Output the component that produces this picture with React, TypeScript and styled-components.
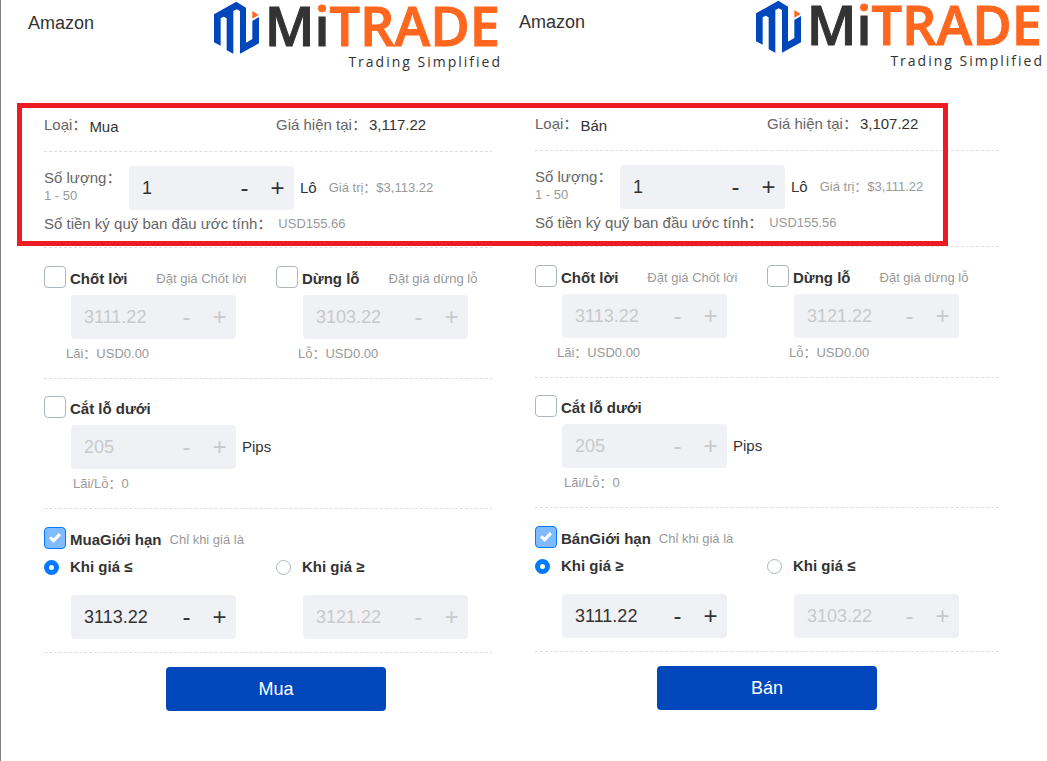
import React, { useId, useState } from "react";
import styled, { createGlobalStyle } from "styled-components";

const GlobalStyle = createGlobalStyle`
  * { box-sizing: border-box; }
  body {
    margin: 0;
    background: #fff;
    color: #333;
    font-family: "Liberation Sans", "Noto Sans CJK SC", sans-serif;
    font-size: 15px;
    line-height: 20px;
  }
  button, input { font: inherit; color: inherit; }
`;

const Page = styled.div`
  position: relative;
  min-height: 100vh;
  border-left: 1px solid #808080;
`;

const Headers = styled.header`
  display: grid;
  grid-template-columns: 499fr 547fr;
  height: 99px;
`;

const Header = styled.div<{ $start: number; $end: number; $top: number }>`
  display: flex;
  justify-content: space-between;
  padding: ${(p) => `${p.$top}px ${p.$end}px 0 ${p.$start}px`};
`;

const Title = styled.h1`
  margin: 12px 0 0;
  font-size: 18px;
  line-height: 20px;
  font-weight: 400;
`;

const Brand = styled.div`
  display: grid;
  grid-template-columns: 45px auto;
  column-gap: 6px;
  align-content: start;
  justify-items: end;
`;

const Mark = styled.svg`
  display: block;
  width: 45px;
  height: 53px;
`;

const Wordmark = styled.div`
  height: 51px;
  font-family: "Open Sans", sans-serif;
  font-size: 54px;
  line-height: 49px;
  font-weight: 600;
  color: #ff671f;
  white-space: nowrap;
  -webkit-text-stroke: 1px #ff671f;
`;

const Dark = styled.span`
  color: #333;
  -webkit-text-stroke-color: #333;
`;

const DottedI = styled.span`
  color: transparent;
  background: linear-gradient(#ff671f 0 36%, #333 36%);
  background-clip: text;
  -webkit-background-clip: text;
  -webkit-text-stroke-color: transparent;
`;

const Tagline = styled.div`
  grid-column: 1 / -1;
  margin-right: -2px;
  font-family: "Open Sans", sans-serif;
  font-size: 14px;
  line-height: 16px;
  letter-spacing: 2px;
`;

const Panels = styled.main`
  display: grid;
  grid-template-columns: 491fr 555fr;
`;

const Panel = styled.section<{ $top: number }>`
  min-width: 0;
  overflow: hidden;
  padding: ${(p) => p.$top}px 48px 0 43px;
`;

const Form = styled.form`
  min-width: 464px;
`;

const Block = styled.div<{ $top: number; $bottom: number }>`
  padding: ${(p) => `${p.$top}px 0 ${p.$bottom}px`};
  border-bottom: 1px dashed #ddd;
`;

const Columns = styled.div`
  display: grid;
  grid-template-columns: 232px 1fr;
`;

const Pair = styled.div`
  display: flex;
  align-items: flex-start;
  gap: 2px;
`;

const Label = styled.span`
  color: #666;
  white-space: nowrap;
`;

const Kind = styled.span`
  line-height: 24px;
`;

const QuantityRow = styled.div`
  display: flex;
  align-items: center;
`;

const QuantityLabel = styled.label`
  width: 85px;
  padding-bottom: 2px;
  color: #666;
  line-height: 18px;
  white-space: nowrap;
`;

const Small = styled.span`
  color: #999;
  font-size: 13px;
  line-height: 18px;
  white-space: nowrap;
`;

const Range = styled(Small)`
  display: block;
`;

const Unit = styled.span`
  margin: 0 12px 0 6px;
`;

const StepperBox = styled.div<{ $off: boolean }>`
  display: flex;
  flex: none;
  width: 165px;
  height: 44px;
  border-radius: 4px;
  background: #f0f1f5;
  color: ${(p) => (p.$off ? "#c8c9cc" : "#333")};
`;

const StepperInput = styled.input`
  flex: 1;
  min-width: 0;
  padding: 0 0 0 13px;
  border: 0;
  background: transparent;
  font-size: 18px;
  outline: none;
`;

const StepButton = styled.button`
  width: 33px;
  padding: 0;
  border: 0;
  background: transparent;
  font-size: 24px;
  line-height: 24px;
`;

const CheckRow = styled.div`
  display: flex;
  align-items: flex-start;
  height: 22px;
`;

const CheckBox = styled.input`
  appearance: none;
  flex: none;
  display: grid;
  place-items: center;
  width: 22px;
  height: 22px;
  margin: 0 4px 0 0;
  border: 1px solid #adb5bd;
  border-radius: 4px;
  background: #fff;
  &:checked {
    border-color: #007bff;
    background: #80bbff;
  }
  &:checked::after {
    content: "";
    width: 12px;
    height: 12px;
    background: #fff;
    clip-path: polygon(82% 9%, 37% 55%, 18% 35%, 0 53%, 37% 91%, 100% 27%);
  }
`;

const BoldLabel = styled.label`
  font-weight: 700;
  line-height: 26px;
  white-space: nowrap;
`;

const Hint = styled(Small)<{ $gap: number }>`
  margin-left: ${(p) => p.$gap}px;
  line-height: 26px;
`;

const Field = styled.div`
  display: flex;
  align-items: center;
  margin: 7px 0 5px 27px;
`;

const Info = styled.div<{ $indent: number }>`
  padding-left: ${(p) => p.$indent}px;
  color: #999;
  font-size: 13px;
`;

const RadioRow = styled.div`
  display: flex;
  align-items: center;
  height: 20px;
  margin: 8px 0 18px;
`;

const Radio = styled.input`
  appearance: none;
  width: 15px;
  height: 15px;
  margin: 0 11px 0 0;
  border: 1px solid #adb5bd;
  border-radius: 50%;
  background: #fff;
  &:checked {
    border: 5px solid #007bff;
  }
`;

const RadioLabel = styled(BoldLabel)`
  line-height: 20px;
`;

const Estimate = styled.div`
  display: flex;
  align-items: center;
  gap: 6px;
  height: 28px;
`;

const RadioField = styled.div`
  padding-left: 27px;
`;

const Submit = styled.button`
  display: block;
  width: 220px;
  height: 44px;
  margin: 14px auto 48px;
  border: 0;
  border-radius: 4px;
  background: #0047bb;
  color: #fff;
  font-size: 18px;
`;

const Highlight = styled.div`
  position: absolute;
  top: 103px;
  left: 16px;
  right: 99px;
  height: 143px;
  border: 5px solid #ed1c24;
  pointer-events: none;
`;

function Logo() {
  return (
    <Brand>
      <Mark viewBox="0 0 135 159" aria-hidden="true">
        <path
          fill="#0047bb"
          d="M0 40 67 2 96 20V125L115 114V60L135 48V127L78 158V30L68 25 58 30V158L38 148V52L29 47 20 52V134L0 124Z"
        />
        <path fill="#ff671f" d="M115 30 134 42 115 53Z" />
      </Mark>
      <Wordmark>
        <Dark>M</Dark>
        <DottedI>i</DottedI>TRADE
      </Wordmark>
      <Tagline>Trading Simplified</Tagline>
    </Brand>
  );
}

function Stepper({ id, value, step = 1, off = false, label }: { id?: string; value: string; step?: number; off?: boolean; label?: string }) {
  const [current, setCurrent] = useState(value);
  const digits = value.includes(".") ? 2 : 0;
  const move = (by: number) => setCurrent((Number(current) + by).toFixed(digits));
  return (
    <StepperBox $off={off}>
      <StepperInput id={id} aria-label={label} value={current} disabled={off} onChange={(e) => setCurrent(e.target.value)} />
      <StepButton type="button" disabled={off} onClick={() => move(-step)}>-</StepButton>
      <StepButton type="button" disabled={off} onClick={() => move(step)}>+</StepButton>
    </StepperBox>
  );
}

function Check({ label, hint, gap = 29, checked = false }: { label: string; hint?: string; gap?: number; checked?: boolean }) {
  const id = useId();
  return (
    <CheckRow>
      <CheckBox type="checkbox" id={id} defaultChecked={checked} />
      <BoldLabel htmlFor={id}>{label}</BoldLabel>
      {hint && <Hint $gap={gap}>{hint}</Hint>}
    </CheckRow>
  );
}

interface Order {
  side: string;
  price: string;
  worth: string;
  margin: string;
  profit: string;
  loss: string;
  signs: [string, string];
  limits: [string, string];
}

function Ticket({ order, top }: { order: Order; top: number }) {
  const id = useId();
  return (
    <Panel $top={top}>
      <Form onSubmit={(e) => e.preventDefault()}>
        <Block $top={15} $bottom={12}>
          <Columns>
            <Pair>
              <Label>Loại：</Label>
              <Kind>{order.side}</Kind>
            </Pair>
            <Pair>
              <Label>Giá hiện tại：</Label>
              <span>{order.price}</span>
            </Pair>
          </Columns>
        </Block>
        <Block $top={14} $bottom={9}>
          <QuantityRow>
            <QuantityLabel htmlFor={`${id}q`}>
              Số lượng：
              <Range>1 - 50</Range>
            </QuantityLabel>
            <Stepper id={`${id}q`} value="1" />
            <Unit>Lô</Unit>
            <Small>Giá trị：{order.worth}</Small>
          </QuantityRow>
          <Estimate>
            <Label>Số tiền ký quỹ ban đầu ước tính：</Label>
            <Small>{order.margin}</Small>
          </Estimate>
        </Block>
        <Block $top={18} $bottom={14}>
          <Columns>
            <div>
              <Check label="Chốt lời" hint="Đặt giá Chốt lời" />
              <Field><Stepper value={order.profit} off label="Chốt lời" /></Field>
              <Info $indent={22}>Lãi：USD0.00</Info>
            </div>
            <div>
              <Check label="Dừng lỗ" hint="Đặt giá dừng lỗ" />
              <Field><Stepper value={order.loss} off label="Dừng lỗ" /></Field>
              <Info $indent={22}>Lỗ：USD0.00</Info>
            </div>
          </Columns>
        </Block>
        <Block $top={17} $bottom={14}>
          <Check label="Cắt lỗ dưới" />
          <Field>
            <Stepper value="205" off label="Cắt lỗ dưới" />
            <Unit>Pips</Unit>
          </Field>
          <Info $indent={29}>Lãi/Lỗ：0</Info>
        </Block>
        <Block $top={18} $bottom={13}>
          <Check label={`${order.side}Giới hạn`} hint="Chỉ khi giá là" gap={8} checked />
          <Columns>
            {order.signs.map((sign, i) => (
              <div key={sign}>
                <RadioRow>
                  <Radio type="radio" name={`${id}r`} id={`${id}r${i}`} defaultChecked={i === 0} />
                  <RadioLabel htmlFor={`${id}r${i}`}>Khi giá {sign}</RadioLabel>
                </RadioRow>
                <RadioField>
                  <Stepper value={order.limits[i]} off={i === 1} label={`Khi giá ${sign}`} />
                </RadioField>
              </div>
            ))}
          </Columns>
        </Block>
        <Submit type="submit">{order.side}</Submit>
      </Form>
    </Panel>
  );
}

const buy: Order = {
  side: "Mua",
  price: "3,117.22",
  worth: "$3,113.22",
  margin: "USD155.66",
  profit: "3111.22",
  loss: "3103.22",
  signs: ["≤", "≥"],
  limits: ["3113.22", "3121.22"],
};

const sell: Order = {
  side: "Bán",
  price: "3,107.22",
  worth: "$3,111.22",
  margin: "USD155.56",
  profit: "3113.22",
  loss: "3121.22",
  signs: ["≥", "≤"],
  limits: ["3111.22", "3103.22"],
};

export default function App() {
  return (
    <Page>
      <GlobalStyle />
      <Headers>
        <Header $start={27} $end={0} $top={1}>
          <Title>Amazon</Title>
          <Logo />
        </Header>
        <Header $start={19} $end={5} $top={0}>
          <Title>Amazon</Title>
          <Logo />
        </Header>
      </Headers>
      <Panels>
        <Ticket order={buy} top={1} />
        <Ticket order={sell} top={0} />
      </Panels>
      <Highlight />
    </Page>
  );
}
